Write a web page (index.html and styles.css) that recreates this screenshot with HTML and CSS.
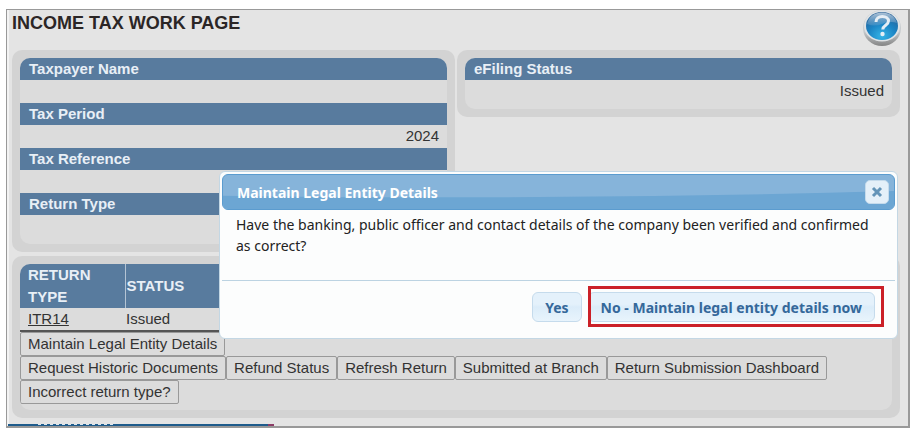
FILE: index.html
```
<!DOCTYPE html>
<html lang="en">
    <head>
        <meta charset="UTF-8">
        <meta name="viewport" content="width=device-width, initial-scale=1.0">
        <title>Income Tax Work Page</title>
        <link rel="stylesheet" href="styles.css">
    </head>
    <body>
        <main class="page">
            <header class="page-header">
                <h1>INCOME TAX WORK PAGE</h1>
                <button class="help-btn" aria-label="Help">
                    <svg width="40" height="38" viewBox="0 0 40 38">
                        <defs>
                            <linearGradient id="rim" x1="0" y1="0" x2="0" y2="1">
                                <stop offset="0" stop-color="#d2d5d8"/>
                                <stop offset="0.6" stop-color="#c6cacd"/>
                                <stop offset="1" stop-color="#858585"/>
                            </linearGradient>
                            <radialGradient id="ball" cx="0.5" cy="0.85" r="0.85">
                                <stop offset="0" stop-color="#35b4e6"/>
                                <stop offset="0.5" stop-color="#1b84c4"/>
                                <stop offset="1" stop-color="#285f94"/>
                            </radialGradient>
                            <linearGradient id="gloss" x1="0" y1="0" x2="0" y2="1">
                                <stop offset="0" stop-color="#c9d6e3" stop-opacity="0.85"/>
                                <stop offset="1" stop-color="#8db4d6" stop-opacity="0.25"/>
                            </linearGradient>
                        </defs>
                        <ellipse cx="20" cy="18" rx="19" ry="18" fill="url(#rim)"/>
                        <ellipse cx="20" cy="16" rx="18" ry="15.5" fill="#dfe3e6"/>
                        <ellipse cx="20" cy="16" rx="16" ry="14" fill="url(#ball)"/>
                        <path d="M5 14C7 6 13 2.500 20 2.500S33 6 35 13c-5-2-10-1-15 1s-10 2-15 0z" fill="url(#gloss)"/>
                        <path d="M14 12c0-3.600 2.800-5.500 6.300-5.500s6.200 1.800 6.200 4.600c0 4.200-5.700 4.200-5.700 8.400" fill="none" stroke="#e6eef5" stroke-width="3"/>
                        <circle cx="20.500" cy="24" r="2.200" fill="#e6eef5"/>
                    </svg>
                </button>
            </header>
            <div class="summary">
                <section class="panel">
                    <dl class="details">
                        <dt>Taxpayer Name</dt>
                        <dd></dd>
                        <dt>Tax Period</dt>
                        <dd>2024</dd>
                        <dt>Tax Reference</dt>
                        <dd></dd>
                        <dt>Return Type</dt>
                        <dd></dd>
                    </dl>
                </section>
                <section class="panel">
                    <dl class="details">
                        <dt>eFiling Status</dt>
                        <dd>Issued</dd>
                    </dl>
                </section>
            </div>
            <section class="panel returns">
                <div class="returns-body">
                    <table class="returns-table">
                        <thead>
                            <tr>
                                <th class="col-type">RETURN TYPE</th>
                                <th>STATUS</th>
                            </tr>
                        </thead>
                        <tbody>
                            <tr>
                                <td class="col-type"><a href="#">ITR14</a></td>
                                <td>Issued</td>
                            </tr>
                        </tbody>
                    </table>
                    <div class="actions">
                        <div class="action-row">
                            <button>Maintain Legal Entity Details</button>
                        </div>
                        <div class="action-row">
                            <button>Request Historic Documents</button>
                            <button>Refund Status</button>
                            <button>Refresh Return</button>
                            <button>Submitted at Branch</button>
                            <button>Return Submission Dashboard</button>
                        </div>
                        <div class="action-row">
                            <button>Incorrect return type?</button>
                        </div>
                    </div>
                </div>
            </section>
            <div class="next-section"><div class="next-section-marks"></div></div>
        </main>
        <div class="dialog" role="dialog" aria-labelledby="dialog-title">
            <div class="dialog-titlebar">
                <svg class="dialog-shine" viewBox="0 0 100 36" preserveAspectRatio="none">
                    <path d="M0 22Q50 27 100 17V36H0z" fill="#6ca6d3"/>
                </svg>
                <h2 id="dialog-title">Maintain Legal Entity Details</h2>
                <button class="close-btn" aria-label="Close">
                    <svg width="12" height="12" viewBox="0 0 12 12">
                        <path d="M2 2l8 8M10 2l-8 8" stroke="#6394b8" stroke-width="3"/>
                    </svg>
                </button>
            </div>
            <p class="dialog-content">Have the banking, public officer and contact details of the company been verified and confirmed as correct?</p>
            <div class="dialog-buttons">
                <button>Yes</button>
                <div class="marked">
                    <button>No - Maintain legal entity details now</button>
                </div>
            </div>
        </div>
    </body>
</html>
```
FILE: styles.css
```
*
{
    box-sizing: border-box;
}
body
{
    position: relative;
    margin: 0;
    padding: 9px 6px 4px 6px;
    background-color: white;
    color: #333;
    font-family: "Liberation Sans", Arial, sans-serif;
    font-size: 15px;
    line-height: 22px;
}
h1, h2, p, dl, dd
{
    margin: 0;
}
button
{
    font: inherit;
    color: inherit;
    cursor: pointer;
}
.page
{
    padding: 0 8px 0 5px;
    border: 1px solid #999;
    border-width: 1px 2px 2px 1px;
    background-color: #e4e4e4;
    box-shadow: inset 2px 0 #f3f3f3;
}
.page-header
{
    display: flex;
    justify-content: space-between;
    align-items: flex-start;
    height: 40px;
}
.page-header h1
{
    padding-top: 2px;
    color: #2b2626;
    font-size: 18px;
}
.help-btn
{
    margin-right: -2px;
    padding: 0;
    border: none;
    background: none;
}
.help-btn svg
{
    display: block;
}
.summary
{
    display: grid;
    grid-template-columns: 1fr 1fr;
    gap: 2px;
    align-items: start;
}
.panel
{
    padding: 8px;
    border-radius: 10px;
    background-color: #d3d3d3;
}
.details,
.returns-body
{
    overflow: hidden;
    border-radius: 10px;
    background-color: #dcdcdc;
}
.details dt
{
    padding: 0 9px;
    background-color: #587b9e;
    color: #e8eff6;
    font-weight: bold;
}
.details dd
{
    height: 23px;
    padding: 0 8px;
    text-align: right;
}
.details dd:last-child
{
    height: 29px;
}
.returns
{
    margin-top: 4px;
}
.returns-body
{
    padding-bottom: 6px;
}
.returns-table
{
    width: 100%;
    table-layout: fixed;
    border-collapse: collapse;
    border-bottom: 2px solid #555;
    text-align: left;
}
.returns-table thead
{
    background-color: #587b9e;
    color: #e8eff6;
}
.returns-table th,
.returns-table td
{
    padding: 0 1px;
}
.returns-table .col-type
{
    width: 105px;
    padding: 0 30px 0 8px;
}
.returns-table th.col-type
{
    border-right: 1px solid #b4c4d4;
}
.returns-table a
{
    color: #333;
}
.action-row
{
    display: flex;
    flex-wrap: wrap;
}
.actions button
{
    height: 24px;
    padding: 0 7px;
    border: 1px solid #999;
    border-radius: 2px;
    background-color: #dcdcdc;
    line-height: 20px;
}
/* top edge of the section that is cut off below */
.next-section
{
    width: 30%;
    height: 2px;
    margin-top: 6px;
    margin-left: -4px;
    padding-left: 30px;
    background-color: #1f5c8c;
    border-right: 6px solid #8c3c66;
}
.next-section-marks
{
    width: 76px;
    height: 1px;
    background: repeating-linear-gradient(90deg, #dce6ee 0 3px, #1f5c8c 3px 6px);
}
.dialog
{
    position: absolute;
    top: 171px;
    left: 219px;
    right: 18px;
    padding: 2px;
    border: 1px solid #c3d7e4;
    border-radius: 6px;
    background-color: #fcfdfd;
    color: #222;
    font-family: "Noto Sans", "Open Sans", sans-serif;
    font-size: 14px;
    line-height: 21px;
}
.dialog-titlebar
{
    position: relative;
    display: flex;
    justify-content: space-between;
    align-items: center;
    height: 36px;
    padding: 0 5px 0 14px;
    overflow: hidden;
    border: 1px solid #5b9ccf;
    border-radius: 6px;
    background-color: #86b4da;
    color: white;
}
.dialog-titlebar h2
{
    position: relative;
    font-size: 14px;
}
.dialog-shine
{
    position: absolute;
    inset: 0;
    width: 100%;
    height: 100%;
}
.close-btn
{
    position: relative;
    display: flex;
    justify-content: center;
    align-items: center;
    width: 24px;
    height: 24px;
    padding: 0;
    border: 1px solid #c5dbec;
    border-radius: 5px;
    background-color: #e4f0f9;
}
.dialog-content
{
    height: 70px;
    padding: 4px 14px;
}
.dialog-buttons
{
    display: flex;
    justify-content: flex-end;
    gap: 6px;
    padding: 11px 20px 14px;
    border-top: 1px solid #bcd3e2;
}
.dialog-buttons button
{
    height: 30px;
    padding: 0 12px;
    border: 1px solid #c5dbec;
    border-radius: 6px;
    background: linear-gradient(#e4f1fb 0 40%, #dbecf9 50%, #e8f4fc);
    color: #35689a;
    font-weight: bold;
}
.marked
{
    position: relative;
}
.marked::after
{
    position: absolute;
    inset: -6px -9px -5px 0;
    border: 3px solid #cb2027;
    content: "";
    pointer-events: none;
}
```
